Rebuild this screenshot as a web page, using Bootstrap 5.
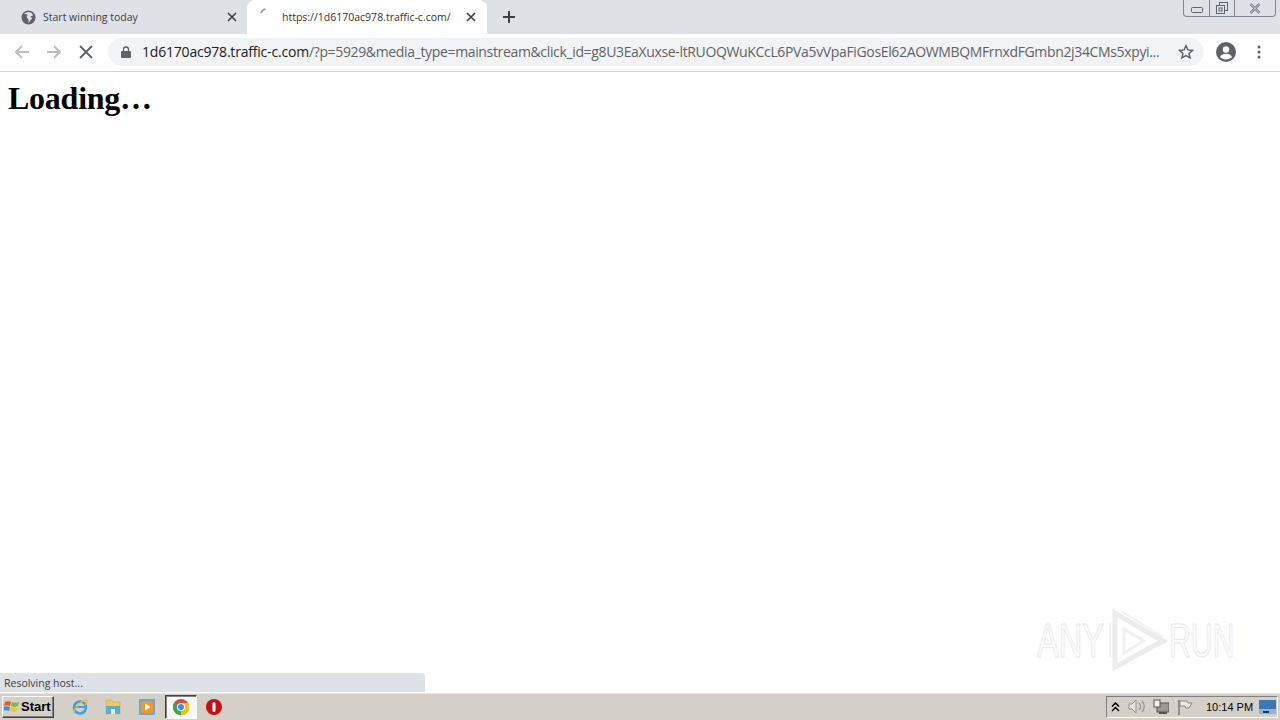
<!DOCTYPE html>
<html lang="en">
<head>
<meta charset="utf-8">
<title>Loading...</title>
<link href="https://cdn.jsdelivr.net/npm/bootstrap@5.3.0/dist/css/bootstrap.min.css" rel="stylesheet">
<style>
html,body{height:720px;overflow:hidden;margin:0;background:#fff}
.shell{height:720px;font-family:"Open Sans","Liberation Sans",sans-serif;color:#3c4043}
.tabstrip{height:34px;background:#dee1e6;padding-left:8px}
.tabitem{width:240px;height:34px;padding:0 11px 0 13px;font-size:10.5px;color:#3c4043;white-space:nowrap}
.tabitem.sel{background:#fff;border-radius:8px 8px 0 0;margin-left:-1px;padding-left:13px;color:#333}
.tabtext{width:176px;margin-left:7px;padding-top:1px}
.tabitem.sel .tabtext{width:175px;margin-left:8px}
.tabplus{margin:10px 0 0 15px}
.wctl{height:17px;border:1px solid #7f8791;border-top:0;border-radius:0 0 4px 4px;margin-right:4px;width:93px}
.wctl>div{height:16px;width:25px;flex:none;border-left:1px solid #7f8791}
.wctl>div:first-child{border-left:0}
.wctl>div:last-child{flex:1 1 auto}
.toolrow{height:38px;border-bottom:1px solid #d4d6d9;background:#fff;padding:0 0 1px 6px}
.navbtn{width:32px;flex:none}
.omni{height:28px;width:1096px;background:#f1f3f4;border-radius:14px;margin-left:6px;padding:0 10px 0 13px;font-size:14px;white-space:nowrap;flex:none}
.omnitext{width:1019px;margin-left:11px;padding-bottom:1px;color:#5f6368;letter-spacing:-.35px}
.omnitext b{font-weight:400;color:#202124;letter-spacing:-.2px}
.tbav{margin-left:12px}
.tbdots{margin-left:21px}
.pagearea{position:relative}
.loadhead{font-family:"Liberation Serif",serif;font-weight:700;font-size:32px;line-height:37px;color:#000;margin:8px 0 0 8px;letter-spacing:-.25px}
.statusbub{position:absolute;left:0;bottom:0;width:425px;height:19px;background:#dee1e6;border-top-right-radius:4px;font-size:10.5px;line-height:21px;padding-left:4px;color:#3c4043}
.wmark{position:absolute;left:1037px;top:537px;color:#fbfbfb;-webkit-text-stroke:1px #e9e9e9;font-family:"Liberation Sans",sans-serif;font-size:48px;line-height:60px}
.wmark span{display:inline-block;white-space:nowrap;transform-origin:left center}
.wmark .l{width:65px;transform:scaleX(.68)}
.wmark .r{width:64px;transform:scaleX(.63);margin-left:2px}
.wmark svg{margin-left:5px}
.taskbar{height:28px;background:#d4d0c8;border-top:1px solid #fff;box-shadow:inset 0 1px 0 #ece9d8}
.startbtn{width:52px;height:22px;margin-left:2px;background:#d4d0c8;border:1px solid;border-color:#fff #404040 #404040 #fff;box-shadow:inset -1px -1px 0 #808080;font:700 13px "Liberation Sans",sans-serif;color:#000;padding-left:1px;gap:1px}
.tbicons{margin-left:9px}
.tbslot{width:33.5px;height:24px;flex:none}
.tbslot.pressed{width:32px;margin-left:1.5px;border:1px solid;border-color:#404040 #fff #fff #404040;background:#fbfaf8;box-shadow:inset 1px 1px 0 #808080}
.tray{width:172px;height:22px;margin-right:2px;border:1px solid;border-color:#808080 #fff #fff #808080;margin-left:auto;padding-left:4px;font:11px "Liberation Sans",sans-serif;color:#000;flex:none}
.clock{margin-left:13px;width:50px;white-space:nowrap}
.trayscreen{margin-left:3px}
</style>
</head>
<body>
<div class="shell d-flex flex-column">
  <div class="tabstrip d-flex align-items-start">
    <div class="tabitem d-flex align-items-center">
      <svg width="15" height="15" viewBox="0 0 16 16"><circle cx="8" cy="8" r="7.500" fill="#5f6368"/><path d="M3 3.500 7 5 6 8l2 2v4l2-3 2-2-2-2 3-1.500-2-2.500-3-1z" fill="#dee1e6"/></svg>
      <div class="tabtext">Start winning today</div>
      <svg width="10" height="10" viewBox="0 0 10 10" class="ms-auto"><path d="M1 1l8 8M9 1l-8 8" stroke="#3c4043" stroke-width="1.600"/></svg>
    </div>
    <div class="tabitem sel d-flex align-items-center">
      <svg width="14" height="14" viewBox="0 0 14 14" class="mb-2"><path d="M1 7C1.500 5 3 3.500 5.500 3" fill="none" stroke="#9a9da1" stroke-width="1.500"/></svg>
      <div class="tabtext">https://1d6170ac978.traffic-c.com/</div>
      <svg width="10" height="10" viewBox="0 0 10 10" class="ms-auto"><path d="M1 1l8 8M9 1l-8 8" stroke="#3c4043" stroke-width="1.600"/></svg>
    </div>
    <svg width="14" height="14" viewBox="0 0 14 14" class="tabplus"><path d="M7 1v12M1 7h12" stroke="#3c4043" stroke-width="2"/></svg>
    <div class="wctl ms-auto d-flex">
      <div class="d-flex align-items-center justify-content-center"><svg width="12" height="6" viewBox="0 0 12 6" class="mt-1"><rect x=".5" y=".5" width="11" height="5" rx="1" fill="none" stroke="#5d6670"/></svg></div>
      <div class="d-flex align-items-center justify-content-center"><svg width="12" height="12" viewBox="0 0 12 12"><rect x="3.500" y=".5" width="8" height="8" fill="none" stroke="#5d6670"/><rect x=".5" y="3.500" width="8" height="8" fill="#dee1e6" stroke="#5d6670"/><rect x="3" y="6" width="3" height="3" fill="none" stroke="#5d6670"/></svg></div>
      <div class="d-flex align-items-center justify-content-center"><svg width="12" height="11" viewBox="0 0 12 11"><path d="M1.500 1l9 9M10.500 1l-9 9" stroke="#5d6670" stroke-width="2.400"/><path d="M1.500 1l9 9M10.500 1l-9 9" stroke="#dee1e6" stroke-width="1"/></svg></div>
    </div>
  </div>
  <div class="toolrow d-flex align-items-center">
    <div class="navbtn d-flex justify-content-center"><svg width="16" height="16" viewBox="0 0 16 16"><path d="M15 8H2M8 2 2 8l6 6" fill="none" stroke="#babcbe" stroke-width="1.800"/></svg></div>
    <div class="navbtn d-flex justify-content-center"><svg width="16" height="16" viewBox="0 0 16 16"><path d="M1 8h13M8 2l6 6-6 6" fill="none" stroke="#babcbe" stroke-width="1.800"/></svg></div>
    <div class="navbtn d-flex justify-content-center"><svg width="14" height="14" viewBox="0 0 14 14"><path d="M1 1l12 12M13 1 1 13" stroke="#5f6368" stroke-width="1.900"/></svg></div>
    <div class="omni d-flex align-items-center">
      <svg width="10" height="12" viewBox="0 0 10 12" class="flex-shrink-0"><path d="M2.500 5V3.500a2.500 2.500 0 0 1 5 0V5" fill="none" stroke="#5f6368" stroke-width="1.300"/><rect y="5" width="10" height="7" rx="1" fill="#5f6368"/></svg>
      <div class="omnitext"><b>1d6170ac978.traffic-c.com</b>/?p=5929&amp;media_type=mainstream&amp;click_id=g8U3EaXuxse-ltRUOQWuKCcL6PVa5vVpaFiGosEl62AOWMBQMFrnxdFGmbn2j34CMs5xpyi...</div>
      <svg width="16" height="16" viewBox="0 0 16 16" class="ms-auto flex-shrink-0"><path d="m8 1.800 1.900 4.100 4.500.5-3.300 3 .9 4.400L8 11.600l-4 2.200.9-4.400-3.300-3 4.500-.5z" fill="none" stroke="#5f6368" stroke-width="1.500"/></svg>
    </div>
    <svg width="20" height="20" viewBox="0 0 20 20" class="flex-shrink-0 tbav"><circle cx="10" cy="10" r="10" fill="#5f6368"/><circle cx="10" cy="7.500" r="3.200" fill="#fff"/><path d="M4 15c1-2.500 3.500-3.300 6-3.300s5 .8 6 3.300c-1.500 1.600-3.600 2.500-6 2.500s-4.500-.9-6-2.500z" fill="#fff"/></svg>
    <svg width="4" height="14" viewBox="0 0 4 14" class="flex-shrink-0 tbdots"><circle cx="2" cy="2" r="1.500" fill="#5f6368"/><circle cx="2" cy="7" r="1.500" fill="#5f6368"/><circle cx="2" cy="12" r="1.500" fill="#5f6368"/></svg>
  </div>
  <div class="pagearea flex-grow-1">
    <h1 class="loadhead">Loading…</h1>
    <div class="wmark d-flex align-items-center">
      <span class="l">ANY</span>
      <svg width="60" height="64" viewBox="0 0 60 64"><path d="M8 4v54L56 32z" fill="none" stroke="#ececec" stroke-width="5"/><path d="M3 14v34M14 2l42 26" fill="none" stroke="#f1f1f1" stroke-width="2"/><path d="M17 20v24l20-12z" fill="none" stroke="#f0f0f0" stroke-width="3"/></svg>
      <span class="r">RUN</span>
    </div>
    <div class="statusbub">Resolving host...</div>
  </div>
  <div class="taskbar d-flex align-items-center">
    <div class="startbtn d-flex align-items-center">
      <svg width="16" height="15" viewBox="0 0 16 15"><path d="M1 3c2-1 4-1 6 0L6 7C4 6 2 6 0 7z" fill="#e8592b"/><path d="M8 3c2 1 4 1 7 0l-1 4c-2 1-5 1-7 0z" fill="#7fba3c"/><path d="M0 8c2-1 4-1 6 0l-1 4c-2-1-4-1-6 0z" fill="#3a8fd9"/><path d="M7 8c2 1 4 1 7 0l-1 4c-2 1-5 1-7 0z" fill="#f5c12e"/></svg>
      Start
    </div>
    <div class="tbicons d-flex align-items-center">
      <div class="tbslot d-flex align-items-center justify-content-center"><svg width="18" height="18" viewBox="0 0 18 18"><circle cx="9" cy="9.500" r="6" fill="none" stroke="#3f9fe0" stroke-width="2.500"/><path d="M4 9h10" stroke="#3f9fe0" stroke-width="2"/><path d="M2 15C5 8 11 2 16 2c1 2-1 4-2 5" fill="none" stroke="#e8b93e" stroke-width="1.300"/></svg></div>
      <div class="tbslot d-flex align-items-center justify-content-center"><svg width="18" height="16" viewBox="0 0 18 16"><path d="M2 1h6l1 2h7v12H2z" fill="#eccb62" stroke="#c9a94d" stroke-width=".6"/><rect x="2" y="7" width="14" height="8" fill="#5ea9cf"/><rect x="7" y="10" width="4" height="5" fill="#e8eef2"/></svg></div>
      <div class="tbslot d-flex align-items-center justify-content-center"><svg width="16" height="16" viewBox="0 0 16 16"><rect width="16" height="16" fill="#6fa5d2"/><rect x="2" y="2" width="12" height="12" rx="2" fill="#f19a21"/><path d="M6 4.500v7l5.500-3.500z" fill="#fff"/></svg></div>
      <div class="tbslot pressed d-flex align-items-center justify-content-center"><svg width="16" height="16" viewBox="0 0 16 16"><circle cx="8" cy="8" r="8" fill="#d9493c"/><path d="M8 8 15 12A8 8 0 0 1 5 15.500z" fill="#3aa757"/><path d="M8 8 5 15.500A8 8 0 0 1 1 4z" fill="#3aa757"/><path d="M8 4h7.500A8 8 0 0 1 8 16z" fill="#f4c20d"/><circle cx="8" cy="8" r="4" fill="#fff"/><circle cx="8" cy="8" r="3" fill="#4285f4"/></svg></div>
      <div class="tbslot d-flex align-items-center justify-content-center"><svg width="16" height="16" viewBox="0 0 16 16"><circle cx="8" cy="8" r="8" fill="#c5100f"/><rect x="6.500" y="3" width="3" height="10" rx="1.500" fill="#fff"/></svg></div>
    </div>
    <div class="tray d-flex align-items-center">
      <svg width="9" height="10" viewBox="0 0 9 10"><path d="M1 4.500 4.500 1 8 4.500M1 9l3.500-3.500L8 9" fill="none" stroke="#000" stroke-width="1.500"/></svg>
      <svg width="17" height="15" viewBox="0 0 17 15" class="ms-2"><path d="M1 5h3l4-4v13l-4-4H1z" fill="#e3e1dc" stroke="#8f8f8f"/><path d="M11 4c2 2 2 5 0 7M14 2c3 3 3 8 0 11" fill="none" stroke="#8f8f8f" stroke-width="1.200"/></svg>
      <svg width="16" height="16" viewBox="0 0 16 16" class="ms-2"><rect x="4" y="4" width="12" height="9" fill="#9a9a92" stroke="#555"/><rect x="1" y="1" width="6" height="7" fill="#eee" stroke="#555"/><path d="M6 13h8v2H6z" fill="#555"/></svg>
      <svg width="16" height="16" viewBox="0 0 16 16" class="ms-2"><path d="M2 1v15" stroke="#777" stroke-width="1.500"/><path d="M3 2h7l1 2h4l-3 5H9L8 7H3z" fill="#eeeae2" stroke="#888"/></svg>
      <div class="clock">10:14 PM</div>
      <svg width="17" height="14" viewBox="0 0 17 14" class="trayscreen"><rect width="17" height="14" fill="#3a78b8"/><rect y="9" width="17" height="5" fill="#8fb4d6"/><rect x="4" y="11" width="6" height="2" fill="#17395f"/></svg>
    </div>
  </div>
</div>
</body>
</html>
